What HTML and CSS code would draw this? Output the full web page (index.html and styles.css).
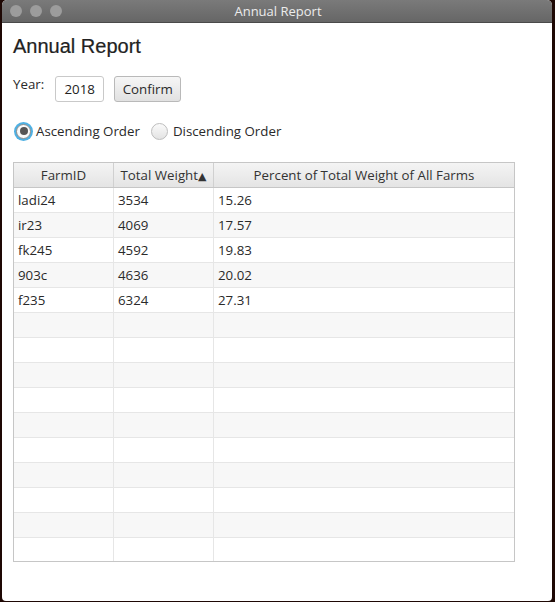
FILE: index.html
```html
<!DOCTYPE html>
<html>
<head>
<meta charset="utf-8">
<link rel="stylesheet" href="styles.css">
</head>
<body>
<div class="window">
  <div class="titlebar">
    <div class="lights"><span class="light"></span><span class="light"></span><span class="light"></span></div>
    <div class="title">Annual Report</div>
  </div>
  <div class="content">
    <h1 class="heading">Annual Report</h1>
    <div class="year-row">
      <span class="year-label">Year:</span>
      <div class="input">2018</div>
      <button class="btn">Confirm</button>
    </div>
    <div class="radio-row">
      <label class="radio"><span class="dot checked"></span>Ascending Order</label>
      <label class="radio"><span class="dot"></span>Discending Order</label>
    </div>
    <div class="table">
      <div class="thead">
        <div class="th c1">FarmID</div>
        <div class="th c2">Total Weight<span class="arrow">▲</span></div>
        <div class="th c3">Percent of Total Weight of All Farms</div>
      </div>
      <div class="tbody">
        <div class="tr"><div class="td c1">ladi24</div><div class="td c2">3534</div><div class="td c3">15.26</div></div>
        <div class="tr"><div class="td c1">ir23</div><div class="td c2">4069</div><div class="td c3">17.57</div></div>
        <div class="tr"><div class="td c1">fk245</div><div class="td c2">4592</div><div class="td c3">19.83</div></div>
        <div class="tr"><div class="td c1">903c</div><div class="td c2">4636</div><div class="td c3">20.02</div></div>
        <div class="tr"><div class="td c1">f235</div><div class="td c2">6324</div><div class="td c3">27.31</div></div>
        <div class="tr"><div class="td c1"></div><div class="td c2"></div><div class="td c3"></div></div>
        <div class="tr"><div class="td c1"></div><div class="td c2"></div><div class="td c3"></div></div>
        <div class="tr"><div class="td c1"></div><div class="td c2"></div><div class="td c3"></div></div>
        <div class="tr"><div class="td c1"></div><div class="td c2"></div><div class="td c3"></div></div>
        <div class="tr"><div class="td c1"></div><div class="td c2"></div><div class="td c3"></div></div>
        <div class="tr"><div class="td c1"></div><div class="td c2"></div><div class="td c3"></div></div>
        <div class="tr"><div class="td c1"></div><div class="td c2"></div><div class="td c3"></div></div>
        <div class="tr"><div class="td c1"></div><div class="td c2"></div><div class="td c3"></div></div>
        <div class="tr"><div class="td c1"></div><div class="td c2"></div><div class="td c3"></div></div>
        <div class="tr"><div class="td c1"></div><div class="td c2"></div><div class="td c3"></div></div>
      </div>
    </div>
  </div>
</div>
</body>
</html>
```
FILE: styles.css
```css
html, body {
  margin: 0;
  padding: 0;
  background: #1e0804;
  width: 555px;
  height: 602px;
  overflow: hidden;
}
.window {
  margin-left: 2px;
  width: 550px;
  height: 601px;
  background: #ffffff;
  border-radius: 5px 5px 4px 4px;
  overflow: hidden;
  display: flex;
  flex-direction: column;
}
.titlebar {
  height: 22px;
  flex: none;
  background: linear-gradient(#7a7a7a, #666666);
  border-bottom: 1px solid #4a4a4a;
  display: flex;
  align-items: center;
  position: relative;
}
.lights {
  display: flex;
  gap: 8px;
  padding-left: 8px;
}
.light {
  width: 12px;
  height: 12px;
  border-radius: 50%;
  background: #9c9c9c;
}
.title {
  position: absolute;
  left: 0;
  right: 0;
  top: 0;
  height: 22px;
  line-height: 23px;
  text-align: center;
  color: #ececec;
  font-family: "Open Sans", "Liberation Sans", sans-serif;
  font-size: 13px;
  padding-left: 2px;
}
.content {
  padding: 12px 0 0 11px;
  font-family: "Open Sans", "Liberation Sans", sans-serif;
  color: #2a2a2a;
}
.heading {
  margin: 0;
  font-family: "Liberation Sans", Arial, sans-serif;
  font-weight: normal;
  font-size: 20px;
  line-height: 22px;
  color: #222;
  -webkit-text-stroke: 0.2px #222;
}
.year-row {
  margin-top: 19px;
  display: flex;
  align-items: flex-start;
  height: 27px;
}
.year-label {
  font-size: 13.3px;
  line-height: 16px;
  margin-top: 0;
}
.input {
  margin-left: 11px;
  width: 47px;
  height: 24px;
  border: 1px solid #c9c9c9;
  border-radius: 3px;
  font-size: 13.3px;
  line-height: 24px;
  text-align: center;
  color: #222;
}
.btn {
  margin-left: 10px;
  width: 67px;
  height: 26px;
  border: 1px solid #b9b9b9;
  border-radius: 3px;
  background: linear-gradient(#f6f6f6, #e1e1e1);
  font-family: "Open Sans", "Liberation Sans", sans-serif;
  font-size: 13.3px;
  color: #2a2a2a;
  padding: 0;
}
.radio-row {
  margin-top: 19px;
  display: flex;
  align-items: center;
  gap: 10px;
}
.radio {
  display: flex;
  align-items: center;
  font-size: 13.3px;
  line-height: 18px;
}
.dot {
  width: 17px;
  height: 17px;
  border-radius: 50%;
  border: 1px solid #bdbdbd;
  background: linear-gradient(#fafafa, #e3e3e3);
  margin-right: 5px;
  position: relative;
  box-sizing: border-box;
  margin-left: 1px;
}
.dot.checked {
  width: 15px;
  height: 15px;
  margin-left: 3px;
  margin-right: 5px;
  border: 1px solid #8e8e8e;
  box-shadow: 0 0 0 2px #4fb0e2;
  background: #fafafa;
}
.dot.checked::after {
  content: "";
  position: absolute;
  left: 2.5px;
  top: 2.5px;
  width: 8px;
  height: 8px;
  border-radius: 50%;
  background: #555;
}
.table {
  margin-top: 22px;
  width: 500px;
  height: 398px;
  border: 1px solid #c6c6c6;
  overflow: hidden;
  font-size: 13.3px;
}
.thead {
  display: flex;
  height: 24px;
  border-bottom: 1px solid #c6c6c6;
  background: linear-gradient(#f4f4f4, #e4e4e4);
}
.th {
  text-align: center;
  line-height: 25px;
  border-right: 1px solid #d0d0d0;
  box-sizing: border-box;
  color: #333;
}
.arrow {
  font-size: 11px;
  vertical-align: 0;
  font-family: "DejaVu Sans", sans-serif;
}
.c1 { width: 100px; flex: none; }
.c2 { width: 100px; flex: none; }
.c3 { flex: 1; border-right: none; }
.tr {
  display: flex;
  height: 25px;
  box-sizing: border-box;
  border-bottom: 1px solid #e6e6e6;
}
.tr:nth-child(even) {
  background: #f7f7f7;
}
.td {
  box-sizing: border-box;
  border-right: 1px solid #e6e6e6;
  line-height: 25px;
  padding-left: 4px;
  color: #2a2a2a;
}
.td.c3 { border-right: none; }
```
